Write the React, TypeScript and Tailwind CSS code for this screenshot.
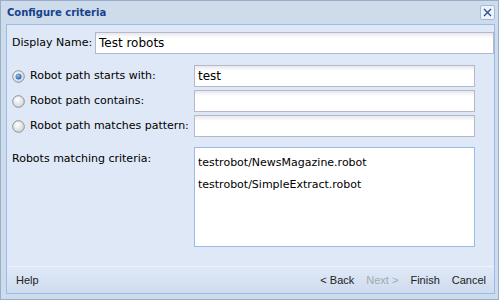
import type { ReactNode } from "react";

const font = "font-['DejaVu_Sans',Tahoma,sans-serif]";

function Radio({ checked }: { checked?: boolean }) {
  return (
    <svg width="13" height="13" viewBox="0 0 13 13" className="shrink-0">
      <defs>
        <radialGradient id="rg" cx="40%" cy="35%" r="70%">
          <stop offset="0%" stopColor="#ffffff" />
          <stop offset="100%" stopColor="#cfd2d6" />
        </radialGradient>
        <radialGradient id="dot" cx="40%" cy="35%" r="70%">
          <stop offset="0%" stopColor="#8fc0f5" />
          <stop offset="100%" stopColor="#1d5ea8" />
        </radialGradient>
      </defs>
      <circle cx="6.5" cy="6.5" r="5.8" fill="url(#rg)" stroke="#8d9197" strokeWidth="1" />
      {checked ? <circle cx="6.5" cy="6.5" r="3" fill="url(#dot)" /> : null}
    </svg>
  );
}

function Field({ value, className }: { value?: string; className?: string }) {
  return (
    <div
      className={`h-[22px] border border-[#b5b8c8] bg-[linear-gradient(to_bottom,#e6e8ec,#ffffff_5px)] pl-[3px] leading-[20px] text-black ${className ?? ""}`}
    >
      {value}
    </div>
  );
}

function RadioRow({ label, value, checked }: { label: string; value?: string; checked?: boolean }) {
  return (
    <div className="flex items-center">
      <div className="flex w-[187px] items-center gap-[5px] pl-[5px]">
        <Radio checked={checked} />
        <span>{label}</span>
      </div>
      <Field value={value} className="w-[281px] text-[12px]" />
    </div>
  );
}

function FooterButton({ children, disabled }: { children: ReactNode; disabled?: boolean }) {
  return <span className={disabled ? "text-[#a3a8b0]" : "text-[#222]"}>{children}</span>;
}

export default function App() {
  return (
    <div className={`${font} flex h-[300px] w-[499px] flex-col border border-[#99aecb] bg-[#cedbeb] text-[11px] text-black`}>
      <div className="flex h-[23px] shrink-0 items-center justify-between pl-[6px] pr-[3px]">
        <span className="text-[10px] font-bold text-[#15428b]">Configure criteria</span>
        <div className="flex h-[15px] w-[15px] items-center justify-center rounded-[2px] border border-[#9fbbe0] bg-[#eef3fa]">
          <svg width="9" height="9" viewBox="0 0 9 9">
            <path d="M1 1L8 8M8 1L1 8" stroke="#2b4f94" strokeWidth="1.4" />
          </svg>
        </div>
      </div>

      <div className="mb-[5px] ml-[5px] mr-[3px] flex flex-1 flex-col border border-[#99bbe8] bg-[#dfe8f6]">
        <div className="flex flex-1 flex-col pt-[7px]">
          <div className="flex items-center">
            <span className="w-[88px] shrink-0 pl-[5px]">Display Name:</span>
            <Field value="Test robots" className="flex-1 text-[12px]" />
          </div>

          <div className="mt-[11px] flex flex-col gap-[3px]">
            <RadioRow label="Robot path starts with:" value="test" checked />
            <RadioRow label="Robot path contains:" />
            <RadioRow label="Robot path matches pattern:" />
          </div>

          <div className="mt-[10px] flex">
            <span className="w-[187px] pl-[5px] pt-[4px]">Robots matching criteria:</span>
            <div className="flex h-[100px] w-[281px] flex-col gap-[5.5px] border border-[#99bbe8] bg-white px-[3px] pt-[7px]">
              <span>testrobot/NewsMagazine.robot</span>
              <span>testrobot/SimpleExtract.robot</span>
            </div>
          </div>
        </div>

        <div className="flex h-[27px] shrink-0 items-center justify-between border-t border-[#eef3fa] bg-[linear-gradient(to_bottom,#dfe8f6,#cfdcef)] pl-[9px] pr-[8px] font-['Liberation_Sans',Arial,sans-serif] text-[11px]">
          <FooterButton>Help</FooterButton>
          <div className="flex gap-[12px]">
            <FooterButton>&lt; Back</FooterButton>
            <FooterButton disabled>Next &gt;</FooterButton>
            <FooterButton>Finish</FooterButton>
            <FooterButton>Cancel</FooterButton>
          </div>
        </div>
      </div>
    </div>
  );
}
